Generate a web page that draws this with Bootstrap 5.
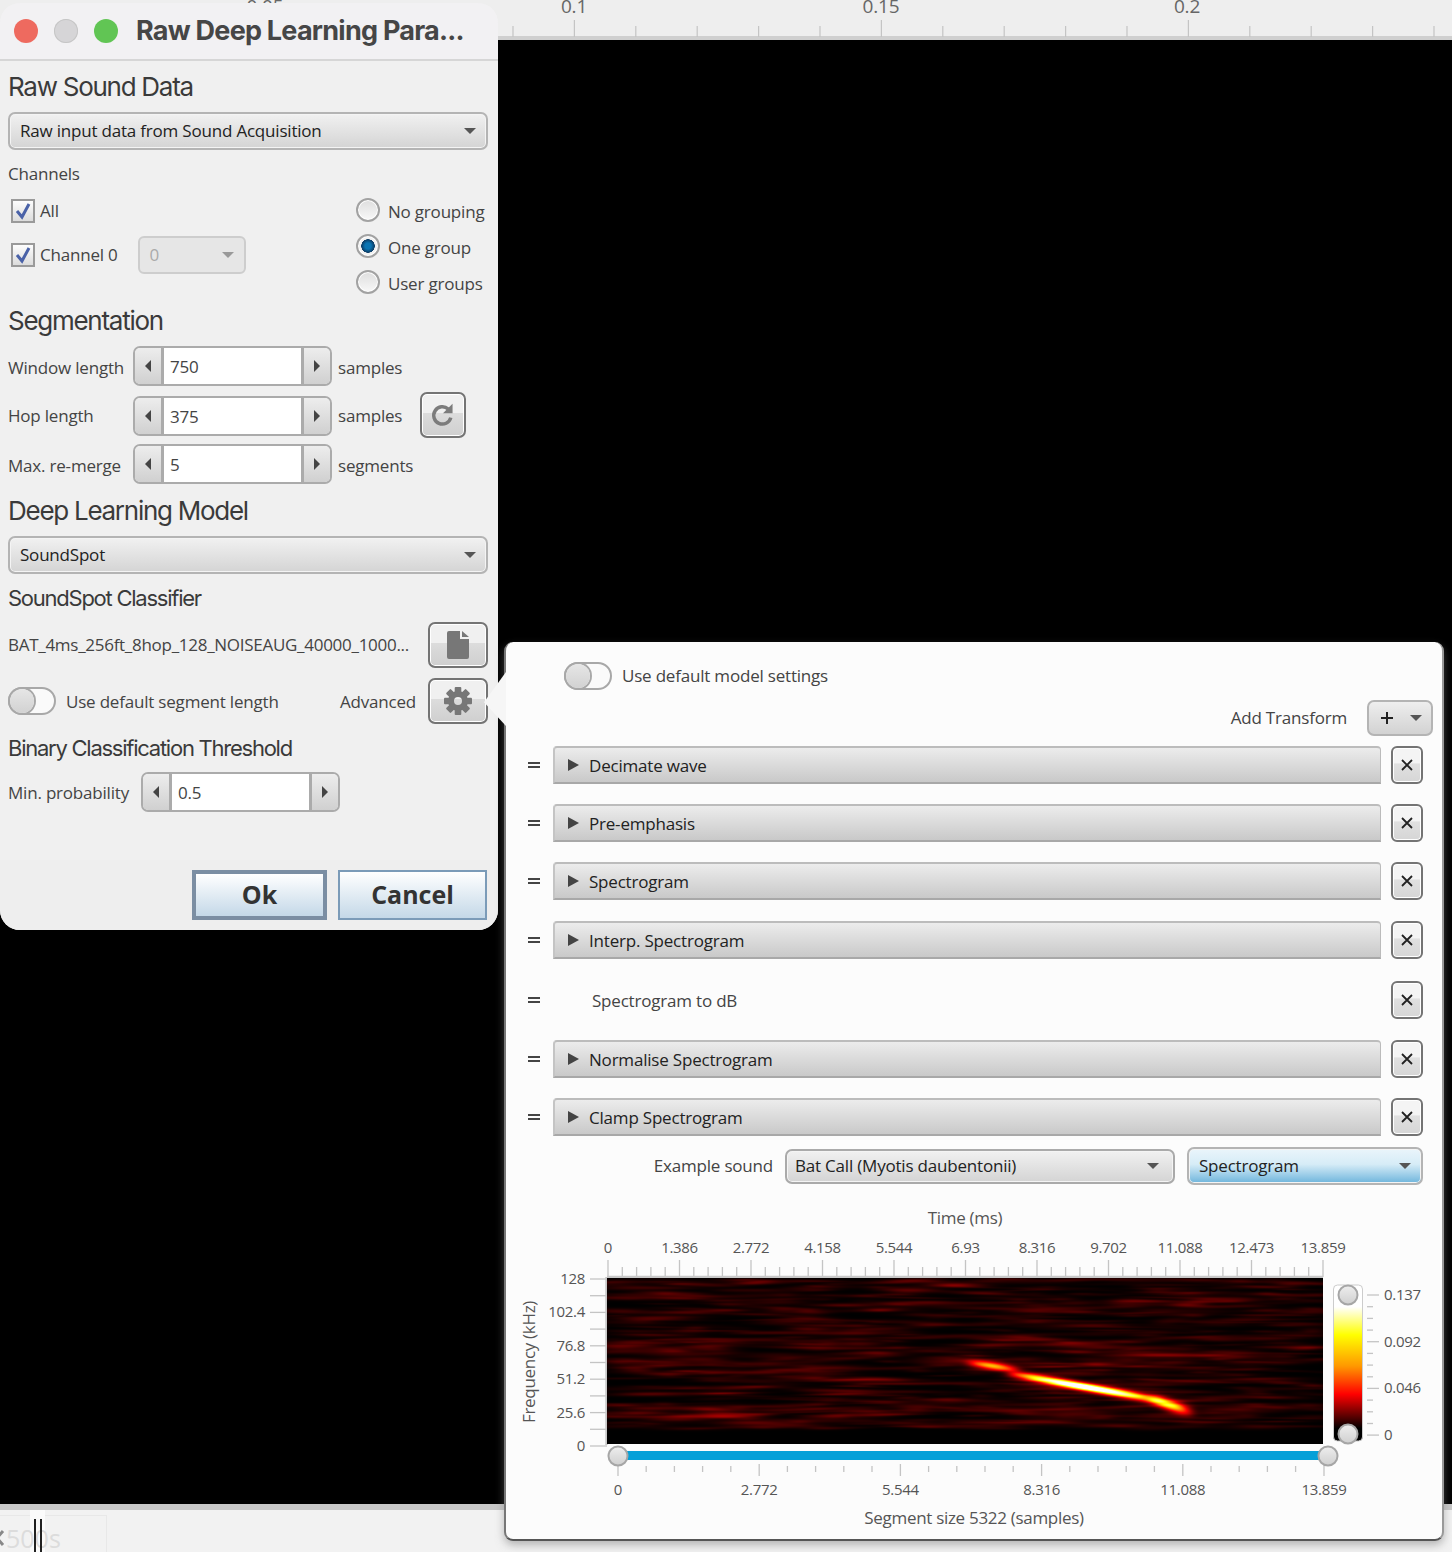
<!DOCTYPE html>
<html lang="en">
<head>
    <meta charset="UTF-8">
    <meta name="viewport" content="width=device-width, initial-scale=1.0">
    <title>Raw Deep Learning Parameters</title>
    <link href="https://cdn.jsdelivr.net/npm/bootstrap@5.3.0/dist/css/bootstrap.min.css" rel="stylesheet">
    <style>
        html, body { margin: 0; height: 1552px; overflow: hidden; background: #000; }
        body { position: relative; width: 1452px; font-family: "Open Sans", "Liberation Sans", sans-serif; font-size: 17px; color: #444; letter-spacing: -.2px; }

        /* desktop strips */
        .top-strip { position: absolute; left: 0; top: 0; width: 1452px; height: 40px; }
        .bottom-strip { position: absolute; left: 0; top: 1504px; width: 1452px; height: 48px; background: #f2f2f2; border-top: 6px solid #c8c8c8; overflow: hidden; }
        .time-box { position: absolute; left: -8px; top: 5px; width: 115px; height: 60px; border: 1px solid #e8e8e8; }
        .time-text { position: absolute; left: 6px; top: 13px; font-size: 25px; line-height: 30px; color: #dcdcdc; letter-spacing: 0; }
        .cursor-glow { position: absolute; left: 30px; top: 0; width: 15px; height: 42px; background: #fbfbfb; }
        .cursor-line { position: absolute; top: 9px; width: 2px; height: 40px; background: #222; }
        .edge-chevron { position: absolute; left: 0; top: 18px; }

        /* left dialog */
        .dlg { position: absolute; left: 0; top: 3px; width: 498px; height: 927px; background: #f0f0f0; border-radius: 20px; overflow: hidden; }
        .dlg-title { height: 58px; background: #f2f1f3; border-bottom: 2px solid #d6d6d6; padding-left: 14px; }
        .light { width: 24px; height: 24px; border-radius: 50%; margin-right: 16px; }
        .dlg-name { font-family: "Inter", "Liberation Sans", sans-serif; font-size: 27px; font-weight: 700; color: #464646; margin-left: 2px; letter-spacing: -.76px; white-space: nowrap; }
        .dlg-body { padding: 0 10px 0 8px; }
        .hd-big { font-family: "Inter", "Liberation Sans", sans-serif; font-size: 26px; color: #3a3a3a; letter-spacing: -1.27px; white-space: nowrap; }
        .hd-mid { font-family: "Inter", "Liberation Sans", sans-serif; font-size: 22px; color: #3a3a3a; letter-spacing: -1.25px; white-space: nowrap; }
        .h-51 { height: 51px; } .h-42 { height: 42px; padding-bottom: 2px; } .h-48 { height: 48px; } .h-52 { height: 52px; }
        .dlg-foot { height: 70px; background: #eee; padding: 10px 11px 0 0; margin-top: 48px; }

        /* fx style widgets */
        .fx-combo { display: flex; align-items: center; justify-content: space-between; height: 38px; border: 2px solid #b4b4b4; border-radius: 7px; background: linear-gradient(#f1f1f1, #d4d4d4); padding: 0 10px; color: #222; box-shadow: inset 0 0 0 1px #f4f4f4; white-space: nowrap; }
        .tri-down { display: inline-block; width: 0; height: 0; border-left: 6px solid transparent; border-right: 6px solid transparent; border-top: 6px solid #555; }
        .tri-left, .tri-right { display: inline-block; width: 0; height: 0; border-top: 6px solid transparent; border-bottom: 6px solid transparent; }
        .tri-left { border-right: 6px solid #444; }
        .tri-right { border-left: 6px solid #444; }
        .fx-check { width: 24px; height: 24px; border: 2px solid #9a9a9a; background: linear-gradient(#fdfdfd, #dcdcdc); margin: 0 5px 0 3px; flex: none; }
        .fx-radio { width: 24px; height: 24px; border-radius: 50%; border: 2px solid #a2a2a2; background: linear-gradient(#dedede, #f8f8f8); margin-right: 8px; margin-top: -4px; flex: none; box-shadow: inset 0 0 0 1px #fff; }
        .fx-radio.on { background: radial-gradient(circle, #0a74b2 0 3px, #0c3d66 6.5px, #f2f2f2 7px); }
        .radio-col { width: 132px; margin-top: -4px; }
        .radio-row { height: 36px; }
        .ch-combo { width: 108px; height: 38px; margin-left: 20px; border: 2px solid #cdcdcd; border-radius: 6px; background: #e6e6e6; color: #aaa; padding: 0 10px; }
        .fx-spin { width: 199px; height: 40px; border: 2px solid #ababab; border-radius: 7px; overflow: hidden; flex: none; }
        .spin-side { width: 26px; background: linear-gradient(#ededed, #d0d0d0); border: 0; padding: 0; border-radius: 0; flex: none; }
        .spin-val { flex: 1; border: 0; border-radius: 0; border-left: 3px solid #ababab; border-right: 3px solid #ababab; background: #fff; height: 36px; padding: 2px 6px 0; font-size: 17px; line-height: 34px; color: #444; }
        .spin-lbl { width: 125px; flex: none; white-space: nowrap; }
        .spin-row { height: 40px; }
        .lbl-low { padding-top: 4px; }
        .icon-btn { width: 60px; height: 46px; border: 2px solid #747474; border-radius: 7px; padding: 0; background: linear-gradient(#f0f0f0 45%, #dcdcdc 46%, #cfcfcf); box-shadow: inset 0 0 0 1px #fff; display: flex; align-items: center; justify-content: center; }
        .fx-toggle { width: 48px; height: 28px; border: 2px solid #a8a8a8; border-radius: 14px; background: #fafafa; flex: none; }
        .fx-toggle i { display: block; width: 24px; height: 24px; border-radius: 50%; background: linear-gradient(#e6e6e6, #d2d2d2); box-shadow: 0 0 0 2px #a8a8a8; }
        .tog-text { margin-left: 10px; padding-top: 2px; }
        .big-btn { height: 50px; border-radius: 0; padding: 0 0 2px; font-size: 25px; font-weight: 700; line-height: 1; color: #333; background: linear-gradient(#fff, #c4d8e8); letter-spacing: 0; }

        /* popover */
        .pop { position: absolute; left: 504px; top: 642px; width: 940px; height: 899px; background: #fcfcfc; border: 2px solid #c4c4c4; border-top: 0; border-bottom-color: #555; border-right-color: #999; border-left-color: #777; border-radius: 9px; box-shadow: 0 4px 8px rgba(120,120,120,.5); padding: 20px 9px 0 1px; }
        .pop-arrow { position: absolute; left: 484px; top: 672px; width: 22px; height: 54px; background: #f6f6f6; clip-path: polygon(100% 0, 0 56%, 100% 100%); }
        .add-btn { width: 66px; height: 36px; border: 2px solid #b4b4b4; border-radius: 7px; background: linear-gradient(#eee, #d2d2d2); padding: 0 9px 0 12px; color: #222; }
        .tf-row { height: 38px; padding-left: 21px; color: #222; }
        .tf-grip { width: 12px; height: 6px; border-top: 2px solid #444; border-bottom: 2px solid #444; margin-right: 13px; flex: none; }
        .tf-pane { width: 828px; height: 38px; border-top: 2px solid #bcbcbc; border-left: 2px solid #c4c4c4; border-right: 1px solid #bbb; border-bottom: 2px solid #a8a8a8; border-radius: 4px 4px 0 0; background: linear-gradient(#ececec, #c9c9c9); padding: 2px 0 0 13px; flex: none; }
        .tf-pane .tri-right { border-top-width: 6px; border-bottom-width: 6px; border-left: 11px solid #444; margin: -2px 10px 0 0; }
        .tf-plain { width: 828px; padding: 2px 0 0 39px; flex: none; }
        .x-btn { width: 32px; height: 38px; margin-left: 10px; border: 2px solid #747474; border-radius: 6px; padding: 0; background: linear-gradient(#f4f4f4 45%, #e0e0e0 46%, #d6d6d6); box-shadow: inset 0 0 0 1px #fff; display: flex; align-items: center; justify-content: center; flex: none; }
        .ex-row { height: 38px; margin-top: 11px; }
        .ex-combo { width: 390px; height: 35px; margin-left: 12px; border: 2px solid #aaa; padding: 0 14px 0 8px; }
        .ex-kind { width: 236px; height: 38px; margin-left: 12px; border: 2px solid #b4b4b4; background: linear-gradient(#eaf5fb, #d6ecf7 45%, #6fb5dc); flex: none; }
        .chart { position: absolute; left: 0; top: 556px; width: 938px; height: 342px; }
        .chart svg { position: absolute; left: 0; top: 0; }
        .chart svg text { font-family: "Open Sans", "Liberation Sans", sans-serif; letter-spacing: -.3px; }
        .heat { position: absolute; left: 101px; top: 80px; }
    </style>
</head>
<body>
    <svg class="top-strip" width="1452" height="40" id="ruler"></svg>

    <div class="bottom-strip">
        <div class="time-box"></div>
        <div class="cursor-glow"></div>
        <div class="time-text">500s</div>
        <svg class="edge-chevron" width="5" height="20" viewBox="0 0 5 20"><path d="M3 3l-6 7 6 7" fill="none" stroke="#888" stroke-width="3"/></svg>
        <div class="cursor-line" style="left:34px"></div>
        <div class="cursor-line" style="left:40px"></div>
    </div>

    <div class="dlg">
        <div class="dlg-title d-flex align-items-center">
            <span class="light" style="background:#ee6a5f"></span>
            <span class="light" style="background:#d6d5d7;box-shadow:inset 0 0 0 1px #c6c6c6"></span>
            <span class="light" style="background:#61c554"></span>
            <span class="dlg-name">Raw Deep Learning Para...</span>
        </div>
        <div class="dlg-body">
            <div class="hd-big h-51 d-flex align-items-center">Raw Sound Data</div>
            <div class="fx-combo"><span>Raw input data from Sound Acquisition</span><span class="tri-down"></span></div>
            <div class="h-48 d-flex align-items-center">Channels</div>
            <div class="d-flex justify-content-between" style="height:102px">
                <div>
                    <div class="d-flex align-items-center" style="height:26px">
                        <span class="fx-check d-flex align-items-center justify-content-center"><svg width="18" height="18" viewBox="0 0 18 18"><path d="M3 9l5 6 7-13" fill="none" stroke="#4a62a8" stroke-width="3"/></svg></span>All
                    </div>
                    <div class="d-flex align-items-center" style="height:38px;margin-top:12px">
                        <span class="fx-check d-flex align-items-center justify-content-center"><svg width="18" height="18" viewBox="0 0 18 18"><path d="M3 9l5 6 7-13" fill="none" stroke="#4a62a8" stroke-width="3"/></svg></span>Channel 0
                        <div class="ch-combo d-flex align-items-center justify-content-between"><span>0</span><span class="tri-down" style="border-top-color:#999"></span></div>
                    </div>
                </div>
                <div class="radio-col">
                    <div class="radio-row d-flex align-items-center"><span class="fx-radio"></span>No grouping</div>
                    <div class="radio-row d-flex align-items-center"><span class="fx-radio on"></span>One group</div>
                    <div class="radio-row d-flex align-items-center"><span class="fx-radio"></span>User groups</div>
                </div>
            </div>
            <div class="hd-big h-42 d-flex align-items-center">Segmentation</div>
            <div class="spin-row d-flex align-items-center mt-1">
                <span class="spin-lbl lbl-low">Window length</span>
                <div class="fx-spin d-flex"><button class="btn spin-side"><span class="tri-left"></span></button><div class="form-control spin-val">750</div><button class="btn spin-side"><span class="tri-right"></span></button></div>
                <span class="lbl-low" style="margin-left:6px">samples</span>
            </div>
            <div class="spin-row d-flex align-items-center" style="margin-top:10px">
                <span class="spin-lbl">Hop length</span>
                <div class="fx-spin d-flex"><button class="btn spin-side"><span class="tri-left"></span></button><div class="form-control spin-val">375</div><button class="btn spin-side"><span class="tri-right"></span></button></div>
                <span style="margin-left:6px">samples</span>
                <button class="btn icon-btn" style="width:46px;margin:-2px 0 0 18px">
                    <svg width="26" height="26" viewBox="0 0 30 30"><path d="M24 18a10 10 0 1 1-3-10" fill="none" stroke="#7c7c7c" stroke-width="4"/><path d="M26 2v11H15z" fill="#7c7c7c"/></svg>
                </button>
            </div>
            <div class="spin-row d-flex align-items-center mt-2">
                <span class="spin-lbl lbl-low">Max. re-merge</span>
                <div class="fx-spin d-flex"><button class="btn spin-side"><span class="tri-left"></span></button><div class="form-control spin-val">5</div><button class="btn spin-side"><span class="tri-right"></span></button></div>
                <span class="lbl-low" style="margin-left:6px">segments</span>
            </div>
            <div class="hd-big h-52 d-flex align-items-center">Deep Learning Model</div>
            <div class="fx-combo"><span>SoundSpot</span><span class="tri-down"></span></div>
            <div class="hd-mid h-48 d-flex align-items-center">SoundSpot Classifier</div>
            <div class="d-flex align-items-center justify-content-between" style="height:46px">
                <span style="white-space:nowrap;letter-spacing:-.28px">BAT_4ms_256ft_8hop_128_NOISEAUG_40000_1000...</span>
                <button class="btn icon-btn">
                    <svg width="24" height="28" viewBox="0 0 24 28"><path d="M3 0h11v8h9v18a2 2 0 0 1-2 2H3a2 2 0 0 1-2-2V2a2 2 0 0 1 2-2zM16 0l7 6h-7z" fill="#777"/></svg>
                </button>
            </div>
            <div class="d-flex align-items-center" style="height:46px;margin-top:10px">
                <span class="fx-toggle"><i></i></span>
                <span class="tog-text">Use default segment length</span>
                <span class="ms-auto" style="margin-right:12px;padding-top:2px">Advanced</span>
                <button class="btn icon-btn">
                    <svg width="28" height="28" viewBox="-14 -14 28 28" fill="#777">
                        <circle r="7" fill="none" stroke="#777" stroke-width="6"/>
                        <rect x="-3.3" y="-14" width="6.6" height="6" rx="1"/>
                        <rect x="-3.3" y="-14" width="6.6" height="6" rx="1" transform="rotate(45)"/>
                        <rect x="-3.3" y="-14" width="6.6" height="6" rx="1" transform="rotate(90)"/>
                        <rect x="-3.3" y="-14" width="6.6" height="6" rx="1" transform="rotate(135)"/>
                        <rect x="-3.3" y="-14" width="6.6" height="6" rx="1" transform="rotate(180)"/>
                        <rect x="-3.3" y="-14" width="6.6" height="6" rx="1" transform="rotate(225)"/>
                        <rect x="-3.3" y="-14" width="6.6" height="6" rx="1" transform="rotate(270)"/>
                        <rect x="-3.3" y="-14" width="6.6" height="6" rx="1" transform="rotate(315)"/>
                    </svg>
                </button>
            </div>
            <div class="hd-mid h-48 d-flex align-items-center">Binary Classification Threshold</div>
            <div class="spin-row d-flex align-items-center">
                <span class="spin-lbl" style="width:133px;padding-top:2px">Min. probability</span>
                <div class="fx-spin d-flex"><button class="btn spin-side"><span class="tri-left"></span></button><div class="form-control spin-val">0.5</div><button class="btn spin-side"><span class="tri-right"></span></button></div>
            </div>
        </div>
        <div class="dlg-foot d-flex justify-content-end">
            <button class="btn big-btn" style="width:135px;border:4px solid #7b8ea3;margin-right:11px">Ok</button>
            <button class="btn big-btn" style="width:149px;border:2px solid #7b9bb8">Cancel</button>
        </div>
    </div>

    <div class="pop">
        <div class="d-flex align-items-center" style="height:28px;padding-left:57px">
            <span class="fx-toggle"><i></i></span>
            <span class="tog-text" style="padding-top:0">Use default model settings</span>
        </div>
        <div class="d-flex align-items-center justify-content-end" style="height:36px;margin-top:10px">
            <span style="margin-right:20px">Add Transform</span>
            <div class="add-btn d-flex align-items-center justify-content-between"><svg width="12" height="12" viewBox="0 0 12 12"><path d="M6 0v12M0 6h12" stroke="#222" stroke-width="2"/></svg><span class="tri-down"></span></div>
        </div>
        <div id="transforms"></div>
        <div class="ex-row d-flex align-items-center justify-content-end" style="padding-right:10px">
            <span style="color:#444">Example sound</span>
            <div class="fx-combo ex-combo"><span>Bat Call (Myotis daubentonii)</span><span class="tri-down"></span></div>
            <div class="fx-combo ex-kind"><span>Spectrogram</span><span class="tri-down"></span></div>
        </div>
        <div class="chart">
            <svg width="938" height="342" id="chartAxes"></svg>
            <canvas class="heat" id="heat" width="716" height="166"></canvas>
            <svg width="938" height="342" id="chartOver"></svg>
        </div>
    </div>
    <div class="pop-arrow"></div>

    <script src="https://cdn.jsdelivr.net/npm/bootstrap@5.3.0/dist/js/bootstrap.bundle.min.js"></script>
    <script>
        // top ruler
        let ruler = '<rect width="1452" height="40" fill="#eeeeee"/><rect y="36" width="1452" height="4" fill="#cfcfcf"/>';
        for (let i = -1; i < 16; i++) {
            const x = 513 + i * 61.4;
            const major = (i + 4) % 5 === 0 && i > 0;
            ruler += `<line x1="${x}" x2="${x}" y1="${major ? 20 : 26}" y2="37" stroke="#c4c4c4" stroke-width="1.2"/>`;
        }
        [['0.05', 265], ['0.1', 574], ['0.15', 881], ['0.2', 1187]].forEach(([t, x]) => {
            ruler += `<text x="${x}" y="13" text-anchor="middle" font-size="19" fill="#666" font-family="Open Sans">${t}</text>`;
        });
        document.getElementById('ruler').innerHTML = ruler;

        // transform rows, top offsets follow the reference pitch
        const rows = [['Decimate wave', 10], ['Pre-emphasis', 20], ['Spectrogram', 20], ['Interp. Spectrogram', 21], ['Spectrogram to dB', 22, true], ['Normalise Spectrogram', 21], ['Clamp Spectrogram', 20]];
        document.getElementById('transforms').innerHTML = rows.map(([name, gap, plain]) => `
            <div class="tf-row d-flex align-items-center" style="margin-top:${gap}px">
                <span class="tf-grip"></span>
                ${plain
                    ? `<div class="tf-plain" style="color:#444">${name}</div>`
                    : `<div class="tf-pane d-flex align-items-center"><span class="tri-right"></span>${name}</div>`}
                <button class="btn x-btn"><svg width="12" height="12" viewBox="0 0 12 12"><path d="M1 1l10 10M11 1L1 11" stroke="#222" stroke-width="1.8"/></svg></button>
            </div>`).join('');

        // chart axes, chart origin is page (506, 1198)
        const ox = 506, oy = 1198;
        const txt = (x, y, t, a, s) => `<text x="${x - ox}" y="${y - oy}" text-anchor="${a || 'middle'}" font-size="${s || 15}" fill="#555">${t}</text>`;
        const ln = (x1, y1, x2, y2, c, w) => `<line x1="${x1 - ox}" y1="${y1 - oy}" x2="${x2 - ox}" y2="${y2 - oy}" stroke="${c || '#c4c4c4'}" stroke-width="${w || 1.3}"/>`;
        let ax = '';
        ax += txt(965, 1224, 'Time (ms)', 'middle', 17);
        ax += txt(974, 1524, 'Segment size 5322 (samples)', 'middle', 17);
        ax += `<text transform="translate(${535 - ox},${1362 - oy}) rotate(-90)" text-anchor="middle" font-size="17" fill="#555">Frequency (kHz)</text>`;
        ['0', '1.386', '2.772', '4.158', '5.544', '6.93', '8.316', '9.702', '11.088', '12.473', '13.859'].forEach((t, i) => {
            const x = 608 + i * 71.5;
            ax += txt(x, 1253, t);
            ax += ln(x, 1260, x, 1277);
            if (i < 10) for (let k = 1; k < 5; k++) ax += ln(x + k * 14.3, 1267, x + k * 14.3, 1277);
        });
        ax += ln(607, 1277, 1323, 1277, '#c8c8c8', 2.5);
        ['128', '102.4', '76.8', '51.2', '25.6', '0'].forEach((t, i) => {
            const y = 1279 + i * 33.4;
            ax += txt(585, y + 5, t, 'end');
            ax += ln(590, y, 607, y);
            if (i < 5) ax += ln(590, y + 16.7, 607, y + 16.7);
        });
        ax += ln(606.5, 1277, 606.5, 1445, '#c8c8c8', 2.5);
        // bottom slider ticks
        ['0', '2.772', '5.544', '8.316', '11.088', '13.859'].forEach((t, i) => {
            const x = 618 + i * 141.2;
            ax += txt(x, 1495, t);
            ax += ln(x, 1464, x, 1476);
            if (i < 5) for (let k = 1; k < 5; k++) ax += ln(x + k * 28.2, 1466, x + k * 28.2, 1472);
        });
        // colour scale ticks
        ['0.137', '0.092', '0.046', '0'].forEach((t, i) => {
            const y = 1295 + i * 46.7;
            ax += txt(1384, y + 5, t, 'start');
            ax += ln(1367, y, 1379, y);
            if (i < 3) for (let k = 1; k < 4; k++) ax += ln(1367, y + k * 11.7, 1373, y + k * 11.7);
        });
        document.getElementById('chartAxes').innerHTML = ax;

        // slider and colour bar go above the heat map
        const thumb = (x, y) => `<circle cx="${x - ox}" cy="${y - oy}" r="9.5" fill="url(#thumbFill)" stroke="#a6a6a6" stroke-width="2"/>`;
        document.getElementById('chartOver').innerHTML = `
            <defs>
                <linearGradient id="thumbFill" x1="0" y1="0" x2="0" y2="1"><stop offset="0" stop-color="#eeeeee"/><stop offset="1" stop-color="#cfcfcf"/></linearGradient>
                <linearGradient id="scaleFill" x1="0" y1="0" x2="0" y2="1">
                    <stop offset="0" stop-color="#ffffff"/><stop offset="0.14" stop-color="#ffffff"/><stop offset="0.32" stop-color="#ffff00"/>
                    <stop offset="0.52" stop-color="#ff9800"/><stop offset="0.7" stop-color="#ff0000"/><stop offset="0.92" stop-color="#000000"/><stop offset="1" stop-color="#000000"/>
                </linearGradient>
            </defs>
            <rect x="${625 - ox}" y="${1451 - oy}" width="696" height="9" fill="#05a0d8"/>
            <rect x="${1333.5 - ox}" y="${1285 - oy}" width="29" height="156" rx="4" fill="url(#scaleFill)" stroke="#cccccc" stroke-width="1"/>
            ${thumb(618, 1456)}${thumb(1328, 1456)}${thumb(1348, 1295)}${thumb(1348, 1434)}`;

        // spectrogram: dark red speckle plus the bat call
        let seed = 7;
        const rnd = () => (seed = (seed * 16807) % 2147483647) / 2147483647;
        const W = 716, H = 166;
        const field = new Float32Array(W * H);
        const blob = (cx, cy, sx, sy, amp, tilt) => {
            const x0 = Math.max(0, Math.floor(cx - 3 * sx)), x1 = Math.min(W - 1, Math.ceil(cx + 3 * sx));
            const y0 = Math.max(0, Math.floor(cy - 3 * sy - Math.abs(tilt || 0) * 3 * sx)), y1 = Math.min(H - 1, Math.ceil(cy + 3 * sy + Math.abs(tilt || 0) * 3 * sx));
            for (let y = y0; y <= y1; y++) for (let x = x0; x <= x1; x++) {
                const dx = (x - cx) / sx, dy = (y - cy - (tilt || 0) * (x - cx)) / sy;
                field[y * W + x] += amp * Math.exp(-.5 * (dx * dx + dy * dy));
            }
        };
        for (let i = 0; i < 1100; i++) {
            blob(rnd() * W, rnd() * 150, 8 + rnd() * 20, .7 + rnd() * 1, .018 + rnd() * .04, (rnd() - .5) * .06);
        }
        for (let i = 0; i < 50; i++) {
            const band = rnd() < .65 ? 60 + rnd() * 30 : 130 + rnd() * 9;
            blob(rnd() * W, band, 10 + rnd() * 18, 1 + rnd() * 1.4, .03 + rnd() * .05, (rnd() - .5) * .05);
        }
        const call = (x1, y1, x2, y2, amp, sy) => {
            const n = Math.ceil((x2 - x1) / 3);
            for (let i = 0; i <= n; i++) {
                const t = i / n;
                blob(x1 + (x2 - x1) * t - 607, y1 + (y2 - y1) * t - 1278, 5, sy, amp * Math.sin(Math.PI * (.08 + .84 * t)) / 2.4);
            }
        };
        call(968, 1362, 1016, 1369, .42, 2.6);
        call(1010, 1373, 1160, 1400, .78, 2.6);
        call(1150, 1398, 1190, 1412, .5, 3.6);
        const ctx = document.getElementById('heat').getContext('2d');
        const img = ctx.createImageData(W, H);
        const clamp = v => Math.max(0, Math.min(1, v));
        for (let i = 0; i < W * H; i++) {
            const v = field[i];
            img.data[i * 4] = 255 * clamp(v / .42);
            img.data[i * 4 + 1] = 255 * clamp((v - .42) / .42);
            img.data[i * 4 + 2] = 255 * clamp((v - .84) / .3);
            img.data[i * 4 + 3] = 255;
        }
        ctx.putImageData(img, 0, 0);
    </script>
</body>
</html>
